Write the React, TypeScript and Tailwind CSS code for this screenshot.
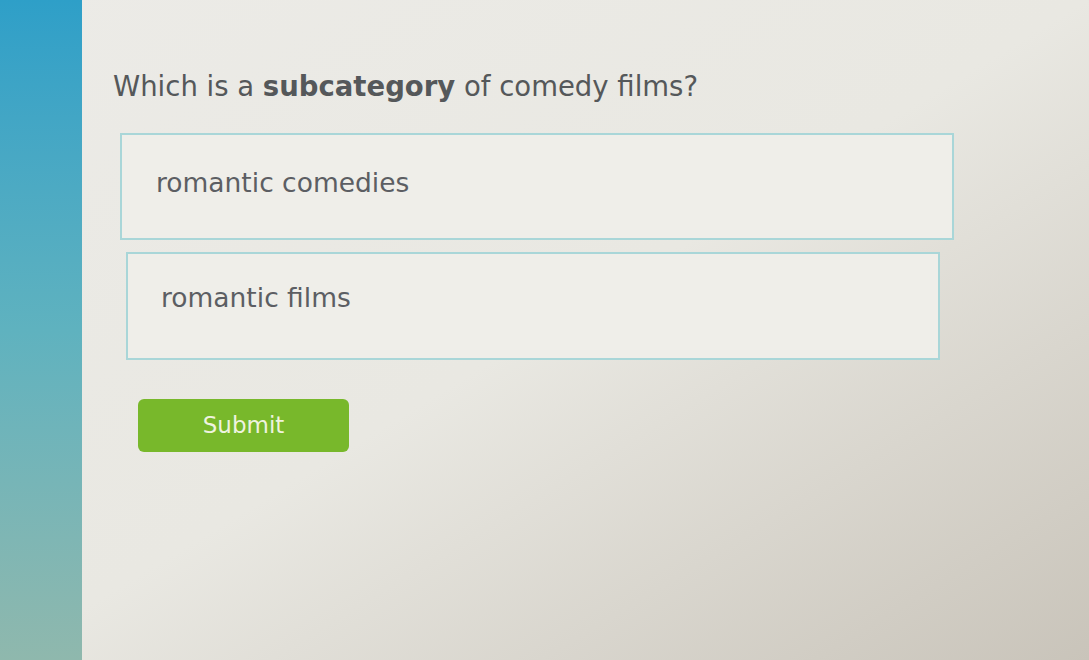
import React from 'react'

const options = ['romantic comedies', 'romantic films']

export default function App() {
  return (
    <div
      className="flex w-[1089px] h-[660px] overflow-hidden bg-gradient-to-br from-[#ecebe7] via-[#e9e8e2] to-[#c9c4ba]"
      style={{ fontFamily: '"DejaVu Sans", Verdana, sans-serif' }}
    >
      {/* Left teal strip */}
      <div className="w-[82px] shrink-0 bg-gradient-to-b from-[#2e9fc8] via-[#5fb2bf] to-[#8fb8ad]" />

      {/* Quiz content */}
      <div className="flex-1 pl-[31px] pt-[68px]">
        <h1 className="text-[27.5px] leading-[36px] text-[#55585a]">
          Which is a <span className="font-bold">subcategory</span> of comedy films?
        </h1>

        <div className="mt-[29px] flex flex-col gap-[12px] pl-[7px]">
          {options.map((opt, i) => (
            <div
              key={opt}
              className={`flex items-start border-2 border-[#a9d6d8] bg-[#efeee9] ${
                i === 0 ? 'w-[834px] h-[107px] pt-[32px] pl-[34px]' : 'ml-[6px] w-[814px] h-[108px] pt-[28px] pl-[33px]'
              }`}
            >
              <span className="text-[26.5px] leading-[32px] text-[#5c5e63]">{opt}</span>
            </div>
          ))}
        </div>

        <button className="mt-[39px] ml-[25px] w-[211px] h-[53px] rounded-md bg-[#78b82b] text-[#eef3df] text-[23px]">
          Submit
        </button>
      </div>
    </div>
  )
}
